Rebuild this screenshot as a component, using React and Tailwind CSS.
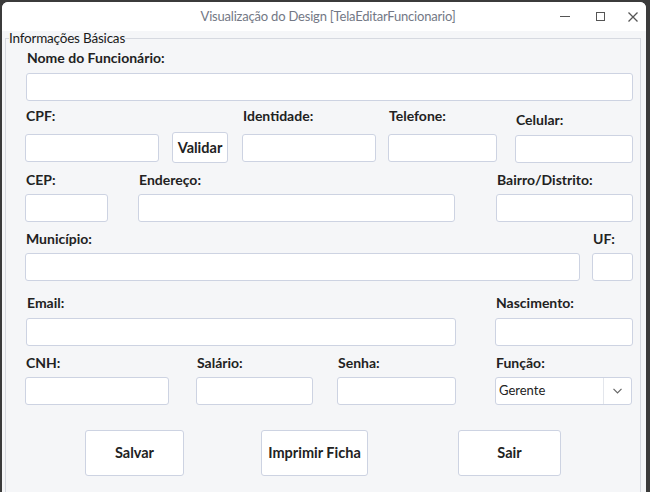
const font = { fontFamily: "Lato, 'DejaVu Sans', sans-serif" };

const Label = ({ children, className = "" }) => (
  <div className={`h-[16px] pl-[1px] text-[14px] leading-[16px] font-bold text-[#222] whitespace-nowrap ${className}`}>
    {children}
  </div>
);

const Input = ({ className = "" }) => (
  <div className={`h-[28px] rounded-[3px] border border-[#cdd3e2] bg-white ${className}`} />
);

const Field = ({ label, w, ml, gap = "mt-[6px]", top = "", inputCls = "" }) => (
  <div className={`flex flex-col ${w} ${ml} ${top}`}>
    <Label>{label}</Label>
    <Input className={`${gap} ${inputCls}`} />
  </div>
);

const Button = ({ children, className = "" }) => (
  <button
    className={`flex items-center justify-center rounded-[3px] border border-[#cdd3e2] bg-white text-[14.5px] font-bold text-[#222] whitespace-nowrap ${className}`}
  >
    {children}
  </button>
);

export default function App() {
  return (
    <div className="flex h-[492px] w-[650px] overflow-hidden bg-[#3b3b3b]" style={font}>
      <div className="mt-[2px] ml-[2px] flex w-[644px] flex-col overflow-hidden rounded-t-[6px] bg-[#f5f6f8]">
        {/* title bar */}
        <div className="flex h-[29px] shrink-0 items-center bg-white">
          <div className="flex-1 pl-[94px] text-center text-[13px] tracking-[-0.2px] text-[#737885]">
            Visualização do Design [TelaEditarFuncionario]
          </div>
          <div className="flex items-center pr-[8px]">
            <div className="h-[1px] w-[10px] bg-[#555]" />
            <div className="ml-[26px] h-[9px] w-[9px] border border-[#555]" />
            <svg className="ml-[23px]" width="10" height="10" viewBox="0 0 10 10">
              <path d="M0.5 0.5 L9.5 9.5 M9.5 0.5 L0.5 9.5" stroke="#555" strokeWidth="1.3" />
            </svg>
          </div>
        </div>

        <fieldset className="mr-[5px] ml-[3px] min-h-[500px] border border-[#d6d9e0] px-0">
          <legend className="ml-[3px] px-0 text-[13.5px] leading-[15px] tracking-[-0.2px] text-[#1a1a1a]">
            Informações Básicas
          </legend>

          {/* row 1 */}
          <div className="mt-[4px] flex">
            <Field label="Nome do Funcionário:" w="w-[607px]" ml="ml-[20px]" gap="mt-[7px]" />
          </div>

          {/* row 2 */}
          <div className="mt-[7px] flex items-start">
            <Field label="CPF:" w="w-[134px]" ml="ml-[19px]" gap="mt-[10px]" />
            <Button className="mt-[24px] ml-[13px] h-[31px] w-[56px]">Validar</Button>
            <Field label="Identidade:" w="w-[134px]" ml="ml-[14px]" gap="mt-[10px]" />
            <Field label="Telefone:" w="w-[109px]" ml="ml-[12px]" gap="mt-[10px]" />
            <Field label="Celular:" w="w-[118px]" ml="ml-[18px]" gap="mt-[7px]" top="mt-[4px]" />
          </div>

          {/* row 3 */}
          <div className="mt-[9px] flex items-start">
            <Field label="CEP:" w="w-[83px]" ml="ml-[19px]" />
            <Field label="Endereço:" w="w-[317px]" ml="ml-[30px]" />
            <Field label="Bairro/Distrito:" w="w-[137px]" ml="ml-[41px]" />
          </div>

          {/* row 4 */}
          <div className="mt-[9px] flex items-start">
            <Field label="Município:" w="w-[555px]" ml="ml-[19px]" />
            <Field label="UF:" w="w-[41px]" ml="ml-[12px]" />
          </div>

          {/* row 5 */}
          <div className="mt-[14px] flex items-start">
            <Field label="Email:" w="w-[430px]" ml="ml-[20px]" gap="mt-[7px]" />
            <Field label="Nascimento:" w="w-[138px]" ml="ml-[39px]" gap="mt-[7px]" />
          </div>

          {/* row 6 */}
          <div className="mt-[9px] flex items-start">
            <Field label="CNH:" w="w-[144px]" ml="ml-[19px]" />
            <Field label="Salário:" w="w-[117px]" ml="ml-[27px]" />
            <Field label="Senha:" w="w-[119px]" ml="ml-[24px]" />
            <div className="ml-[39px] flex w-[137px] flex-col">
              <Label>Função:</Label>
              <div className="mt-[6px] flex h-[28px] items-stretch rounded-[3px] border border-[#cdd3e2] bg-white">
                <div className="flex flex-1 items-center pl-[3px] text-[13px] text-[#222]">Gerente</div>
                <div className="flex w-[28px] items-center justify-center border-l border-[#e3e6ec]">
                  <svg width="9" height="6" viewBox="0 0 9 6">
                    <path d="M0.5 0.8 L4.5 4.8 L8.5 0.8" fill="none" stroke="#666" strokeWidth="1.2" />
                  </svg>
                </div>
              </div>
            </div>
          </div>

          {/* buttons */}
          <div className="mt-[25px] flex items-start">
            <Button className="ml-[79px] h-[46px] w-[99px]">Salvar</Button>
            <Button className="ml-[77px] h-[46px] w-[107px]">Imprimir Ficha</Button>
            <Button className="ml-[90px] h-[46px] w-[103px]">Sair</Button>
          </div>
        </fieldset>
      </div>
    </div>
  );
}
